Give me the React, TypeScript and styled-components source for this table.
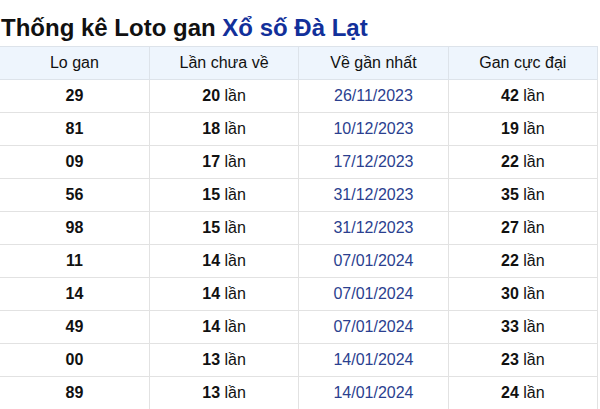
import React from "react";
import styled, { createGlobalStyle } from "styled-components";

const Global = createGlobalStyle`
  html, body { margin: 0; padding: 0; background: #fff; }
  body { font-family: "Liberation Sans", Arial, sans-serif; }
`;

const Wrap = styled.div`
  width: 598px;
  padding: 0;
`;

const Title = styled.h2`
  margin: 0;
  padding: 14px 0 0 1px;
  height: 32px;
  font-size: 24px;
  line-height: 28px;
  font-weight: 700;
  color: #111;
  white-space: nowrap;
`;

const Accent = styled.span`
  color: #12309a;
`;

const Table = styled.table`
  width: 598px;
  border-collapse: collapse;
  table-layout: fixed;
  font-size: 16px;
  color: #111;
`;

const Th = styled.th`
  background: #eef5fd;
  border: 1px solid #dde3ea;
  border-left: none;
  height: 32px;
  font-weight: 400;
  text-align: center;
  padding: 0;
`;

const Td = styled.td<{ $blue?: boolean }>`
  border: 1px solid #e2e2e2;
  border-left: none;
  height: 32px;
  text-align: center;
  padding: 0;
  color: ${(p) => (p.$blue ? "#2b3f8f" : "#111")};
`;

const B = styled.b`
  font-weight: 700;
`;

const rows: [string, number, string, number][] = [
  ["29", 20, "26/11/2023", 42],
  ["81", 18, "10/12/2023", 19],
  ["09", 17, "17/12/2023", 22],
  ["56", 15, "31/12/2023", 35],
  ["98", 15, "31/12/2023", 27],
  ["11", 14, "07/01/2024", 22],
  ["14", 14, "07/01/2024", 30],
  ["49", 14, "07/01/2024", 33],
  ["00", 13, "14/01/2024", 23],
  ["89", 13, "14/01/2024", 24],
];

export default function App() {
  return (
    <Wrap>
      <Global />
      <Title>
        Thống kê Loto gan <Accent>Xổ số Đà Lạt</Accent>
      </Title>
      <Table>
        <thead>
          <tr>
            <Th>Lo gan</Th>
            <Th>Lần chưa về</Th>
            <Th>Về gần nhất</Th>
            <Th>Gan cực đại</Th>
          </tr>
        </thead>
        <tbody>
          {rows.map((r) => (
            <tr key={r[0]}>
              <Td><B>{r[0]}</B></Td>
              <Td><B>{r[1]}</B> lần</Td>
              <Td $blue>{r[2]}</Td>
              <Td><B>{r[3]}</B> lần</Td>
            </tr>
          ))}
        </tbody>
      </Table>
    </Wrap>
  );
}
